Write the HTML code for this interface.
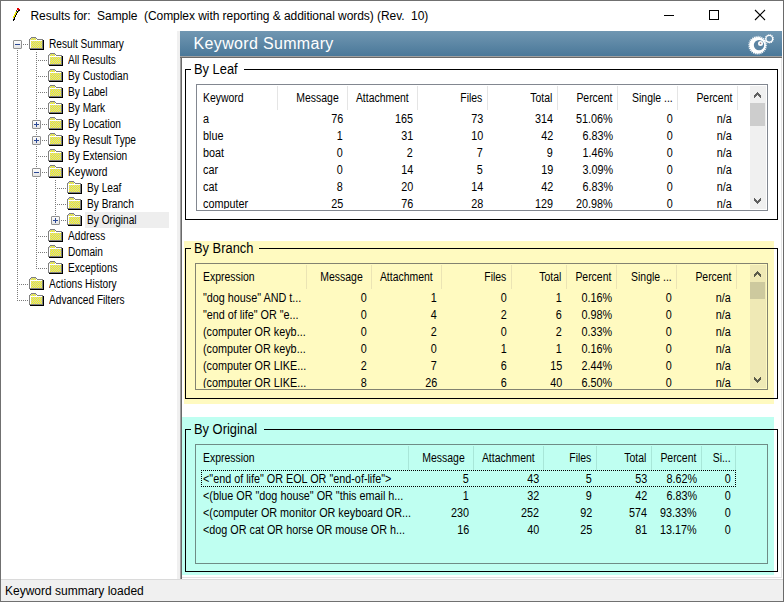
<!DOCTYPE html><html><head><meta charset="utf-8"><style>
html,body{margin:0;padding:0;}
body{width:784px;height:602px;position:relative;overflow:hidden;background:#fff;font-family:"Liberation Sans", sans-serif;}
.t{position:absolute;white-space:nowrap;}
.fold{position:absolute;width:16px;height:14px;}
</style></head><body>
<svg style="position:absolute;left:0;top:0" width="24" height="24" shape-rendering="crispEdges"><rect x="17" y="8" width="1" height="1" fill="#e00000"/><rect x="18" y="8" width="1" height="1" fill="#e00000"/><rect x="18" y="9" width="1" height="1" fill="#e00000"/><rect x="19" y="9" width="1" height="1" fill="#e00000"/><rect x="17" y="9" width="1" height="1" fill="#e00000"/><rect x="16" y="10" width="1" height="1" fill="#a00000"/><rect x="19" y="10" width="1" height="1" fill="#000"/><rect x="18" y="10" width="1" height="1" fill="#000"/><rect x="16" y="11" width="1" height="1" fill="#20a020"/><rect x="17" y="11" width="1" height="1" fill="#000"/><rect x="18" y="11" width="1" height="1" fill="#606060"/><rect x="16" y="12" width="1" height="1" fill="#f2e600"/><rect x="15" y="12" width="1" height="1" fill="#f2e600"/><rect x="15" y="13" width="1" height="1" fill="#f2e600"/><rect x="14" y="14" width="1" height="1" fill="#f2e600"/><rect x="15" y="14" width="1" height="1" fill="#f2e600"/><rect x="14" y="15" width="1" height="1" fill="#f2e600"/><rect x="13" y="16" width="1" height="1" fill="#f2e600"/><rect x="14" y="16" width="1" height="1" fill="#f2e600"/><rect x="13" y="17" width="1" height="1" fill="#f2e600"/><rect x="17" y="12" width="1" height="1" fill="#000"/><rect x="16" y="13" width="1" height="1" fill="#000"/><rect x="16" y="14" width="1" height="1" fill="#000"/><rect x="15" y="15" width="1" height="1" fill="#000"/><rect x="15" y="16" width="1" height="1" fill="#000"/><rect x="14" y="17" width="1" height="1" fill="#000"/><rect x="14" y="18" width="1" height="1" fill="#000"/><rect x="13" y="18" width="1" height="1" fill="#c8c8c8"/><rect x="13" y="19" width="1" height="1" fill="#000"/><rect x="14" y="19" width="1" height="1" fill="#000"/><rect x="13" y="20" width="1" height="1" fill="#000"/></svg>
<div class="t" style="left:30.5px;top:9.74px;font-size:12px;line-height:13.404px;color:#000;letter-spacing:-0.055px;">Results for:&nbsp; Sample&nbsp; (Complex with reporting &amp; additional words) (Rev.&nbsp; 10)</div>
<div style="position:absolute;left:664px;top:15px;width:10px;height:1px;background:#000"></div>
<div style="position:absolute;left:709px;top:10px;width:10px;height:10px;box-sizing:border-box;border:1px solid #000"></div>
<svg style="position:absolute;left:754px;top:9px" width="12" height="12" viewBox="0 0 12 12"><path d="M1 1 L11 11 M11 1 L1 11" stroke="#000" stroke-width="1.1"/></svg>
<div style="position:absolute;left:17px;top:50px;width:1px;height:251px;background-image:repeating-linear-gradient(to bottom,#7a7a7a 0 1px,transparent 1px 2px);"></div>
<div style="position:absolute;left:36px;top:52px;width:1px;height:217px;background-image:repeating-linear-gradient(to bottom,#7a7a7a 0 1px,transparent 1px 2px);"></div>
<div style="position:absolute;left:55px;top:180px;width:1px;height:41px;background-image:repeating-linear-gradient(to bottom,#7a7a7a 0 1px,transparent 1px 2px);"></div>
<div style="position:absolute;left:85px;top:212px;width:84px;height:16px;background:#eeeeee"></div>
<div style="position:absolute;left:23px;top:44px;width:5px;height:1px;background-image:repeating-linear-gradient(to right,#7a7a7a 0 1px,transparent 1px 2px);"></div>
<div style="position:absolute;left:13px;top:40px;width:9px;height:9px;box-sizing:border-box;border:1px solid #919191;border-radius:1px;background:linear-gradient(#fdfdfd,#e4e4e4)"></div>
<div style="position:absolute;left:15px;top:44px;width:5px;height:1px;background:#2b4895"></div>
<svg style="position:absolute;left:28px;top:36px" width="17" height="15" viewBox="0 0 17 15" shape-rendering="crispEdges"><path fill="#c4c4cc" d="M3 2h5v2h-5zM3 5h11v7h-11z"/><path fill="#ff0" d="M4 2h1v1h-1zM6 2h1v1h-1zM3 3h1v1h-1zM5 3h1v1h-1zM7 3h1v1h-1zM3 5h1v1h-1zM5 5h1v1h-1zM7 5h1v1h-1zM9 5h1v1h-1zM11 5h1v1h-1zM13 5h1v1h-1zM4 6h1v1h-1zM6 6h1v1h-1zM8 6h1v1h-1zM10 6h1v1h-1zM12 6h1v1h-1zM3 7h1v1h-1zM5 7h1v1h-1zM7 7h1v1h-1zM9 7h1v1h-1zM11 7h1v1h-1zM13 7h1v1h-1zM4 8h1v1h-1zM6 8h1v1h-1zM8 8h1v1h-1zM10 8h1v1h-1zM12 8h1v1h-1zM3 9h1v1h-1zM5 9h1v1h-1zM7 9h1v1h-1zM9 9h1v1h-1zM11 9h1v1h-1zM13 9h1v1h-1zM4 10h1v1h-1zM6 10h1v1h-1zM8 10h1v1h-1zM10 10h1v1h-1zM12 10h1v1h-1zM3 11h1v1h-1zM5 11h1v1h-1zM7 11h1v1h-1zM9 11h1v1h-1zM11 11h1v1h-1zM13 11h1v1h-1z"/><path fill="#808080" d="M3 1h5v1h-5zM2 2h1v1h-1zM8 2h1v1h-1zM9 3h6v1h-6zM1 3h1v10h-1zM1 12h14v1h-14zM14 4h1v9h-1z"/><path fill="#d0d0d0" d="M2 3h1v1h-1z"/><path fill="#fff" d="M2 4h12v1h-12zM2 4h1v8h-1z"/><path fill="#000" d="M15 4h1v10h-1zM2 13h14v1h-14z"/></svg>
<div class="t" style="left:49px;top:37.94px;font-size:12px;line-height:13.404px;color:#000;letter-spacing:0px;transform:scaleX(0.845);transform-origin:left center;">Result Summary</div>
<div style="position:absolute;left:38px;top:60px;width:9px;height:1px;background-image:repeating-linear-gradient(to right,#7a7a7a 0 1px,transparent 1px 2px);"></div>
<svg style="position:absolute;left:47px;top:52px" width="17" height="15" viewBox="0 0 17 15" shape-rendering="crispEdges"><path fill="#c4c4cc" d="M3 2h5v2h-5zM3 5h11v7h-11z"/><path fill="#ff0" d="M4 2h1v1h-1zM6 2h1v1h-1zM3 3h1v1h-1zM5 3h1v1h-1zM7 3h1v1h-1zM3 5h1v1h-1zM5 5h1v1h-1zM7 5h1v1h-1zM9 5h1v1h-1zM11 5h1v1h-1zM13 5h1v1h-1zM4 6h1v1h-1zM6 6h1v1h-1zM8 6h1v1h-1zM10 6h1v1h-1zM12 6h1v1h-1zM3 7h1v1h-1zM5 7h1v1h-1zM7 7h1v1h-1zM9 7h1v1h-1zM11 7h1v1h-1zM13 7h1v1h-1zM4 8h1v1h-1zM6 8h1v1h-1zM8 8h1v1h-1zM10 8h1v1h-1zM12 8h1v1h-1zM3 9h1v1h-1zM5 9h1v1h-1zM7 9h1v1h-1zM9 9h1v1h-1zM11 9h1v1h-1zM13 9h1v1h-1zM4 10h1v1h-1zM6 10h1v1h-1zM8 10h1v1h-1zM10 10h1v1h-1zM12 10h1v1h-1zM3 11h1v1h-1zM5 11h1v1h-1zM7 11h1v1h-1zM9 11h1v1h-1zM11 11h1v1h-1zM13 11h1v1h-1z"/><path fill="#808080" d="M3 1h5v1h-5zM2 2h1v1h-1zM8 2h1v1h-1zM9 3h6v1h-6zM1 3h1v10h-1zM1 12h14v1h-14zM14 4h1v9h-1z"/><path fill="#d0d0d0" d="M2 3h1v1h-1z"/><path fill="#fff" d="M2 4h12v1h-12zM2 4h1v8h-1z"/><path fill="#000" d="M15 4h1v10h-1zM2 13h14v1h-14z"/></svg>
<div class="t" style="left:68px;top:53.94px;font-size:12px;line-height:13.404px;color:#000;letter-spacing:0px;transform:scaleX(0.845);transform-origin:left center;">All Results</div>
<div style="position:absolute;left:38px;top:76px;width:9px;height:1px;background-image:repeating-linear-gradient(to right,#7a7a7a 0 1px,transparent 1px 2px);"></div>
<svg style="position:absolute;left:47px;top:68px" width="17" height="15" viewBox="0 0 17 15" shape-rendering="crispEdges"><path fill="#c4c4cc" d="M3 2h5v2h-5zM3 5h11v7h-11z"/><path fill="#ff0" d="M4 2h1v1h-1zM6 2h1v1h-1zM3 3h1v1h-1zM5 3h1v1h-1zM7 3h1v1h-1zM3 5h1v1h-1zM5 5h1v1h-1zM7 5h1v1h-1zM9 5h1v1h-1zM11 5h1v1h-1zM13 5h1v1h-1zM4 6h1v1h-1zM6 6h1v1h-1zM8 6h1v1h-1zM10 6h1v1h-1zM12 6h1v1h-1zM3 7h1v1h-1zM5 7h1v1h-1zM7 7h1v1h-1zM9 7h1v1h-1zM11 7h1v1h-1zM13 7h1v1h-1zM4 8h1v1h-1zM6 8h1v1h-1zM8 8h1v1h-1zM10 8h1v1h-1zM12 8h1v1h-1zM3 9h1v1h-1zM5 9h1v1h-1zM7 9h1v1h-1zM9 9h1v1h-1zM11 9h1v1h-1zM13 9h1v1h-1zM4 10h1v1h-1zM6 10h1v1h-1zM8 10h1v1h-1zM10 10h1v1h-1zM12 10h1v1h-1zM3 11h1v1h-1zM5 11h1v1h-1zM7 11h1v1h-1zM9 11h1v1h-1zM11 11h1v1h-1zM13 11h1v1h-1z"/><path fill="#808080" d="M3 1h5v1h-5zM2 2h1v1h-1zM8 2h1v1h-1zM9 3h6v1h-6zM1 3h1v10h-1zM1 12h14v1h-14zM14 4h1v9h-1z"/><path fill="#d0d0d0" d="M2 3h1v1h-1z"/><path fill="#fff" d="M2 4h12v1h-12zM2 4h1v8h-1z"/><path fill="#000" d="M15 4h1v10h-1zM2 13h14v1h-14z"/></svg>
<div class="t" style="left:68px;top:69.94px;font-size:12px;line-height:13.404px;color:#000;letter-spacing:0px;transform:scaleX(0.845);transform-origin:left center;">By Custodian</div>
<div style="position:absolute;left:38px;top:92px;width:9px;height:1px;background-image:repeating-linear-gradient(to right,#7a7a7a 0 1px,transparent 1px 2px);"></div>
<svg style="position:absolute;left:47px;top:84px" width="17" height="15" viewBox="0 0 17 15" shape-rendering="crispEdges"><path fill="#c4c4cc" d="M3 2h5v2h-5zM3 5h11v7h-11z"/><path fill="#ff0" d="M4 2h1v1h-1zM6 2h1v1h-1zM3 3h1v1h-1zM5 3h1v1h-1zM7 3h1v1h-1zM3 5h1v1h-1zM5 5h1v1h-1zM7 5h1v1h-1zM9 5h1v1h-1zM11 5h1v1h-1zM13 5h1v1h-1zM4 6h1v1h-1zM6 6h1v1h-1zM8 6h1v1h-1zM10 6h1v1h-1zM12 6h1v1h-1zM3 7h1v1h-1zM5 7h1v1h-1zM7 7h1v1h-1zM9 7h1v1h-1zM11 7h1v1h-1zM13 7h1v1h-1zM4 8h1v1h-1zM6 8h1v1h-1zM8 8h1v1h-1zM10 8h1v1h-1zM12 8h1v1h-1zM3 9h1v1h-1zM5 9h1v1h-1zM7 9h1v1h-1zM9 9h1v1h-1zM11 9h1v1h-1zM13 9h1v1h-1zM4 10h1v1h-1zM6 10h1v1h-1zM8 10h1v1h-1zM10 10h1v1h-1zM12 10h1v1h-1zM3 11h1v1h-1zM5 11h1v1h-1zM7 11h1v1h-1zM9 11h1v1h-1zM11 11h1v1h-1zM13 11h1v1h-1z"/><path fill="#808080" d="M3 1h5v1h-5zM2 2h1v1h-1zM8 2h1v1h-1zM9 3h6v1h-6zM1 3h1v10h-1zM1 12h14v1h-14zM14 4h1v9h-1z"/><path fill="#d0d0d0" d="M2 3h1v1h-1z"/><path fill="#fff" d="M2 4h12v1h-12zM2 4h1v8h-1z"/><path fill="#000" d="M15 4h1v10h-1zM2 13h14v1h-14z"/></svg>
<div class="t" style="left:68px;top:85.94px;font-size:12px;line-height:13.404px;color:#000;letter-spacing:0px;transform:scaleX(0.845);transform-origin:left center;">By Label</div>
<div style="position:absolute;left:38px;top:108px;width:9px;height:1px;background-image:repeating-linear-gradient(to right,#7a7a7a 0 1px,transparent 1px 2px);"></div>
<svg style="position:absolute;left:47px;top:100px" width="17" height="15" viewBox="0 0 17 15" shape-rendering="crispEdges"><path fill="#c4c4cc" d="M3 2h5v2h-5zM3 5h11v7h-11z"/><path fill="#ff0" d="M4 2h1v1h-1zM6 2h1v1h-1zM3 3h1v1h-1zM5 3h1v1h-1zM7 3h1v1h-1zM3 5h1v1h-1zM5 5h1v1h-1zM7 5h1v1h-1zM9 5h1v1h-1zM11 5h1v1h-1zM13 5h1v1h-1zM4 6h1v1h-1zM6 6h1v1h-1zM8 6h1v1h-1zM10 6h1v1h-1zM12 6h1v1h-1zM3 7h1v1h-1zM5 7h1v1h-1zM7 7h1v1h-1zM9 7h1v1h-1zM11 7h1v1h-1zM13 7h1v1h-1zM4 8h1v1h-1zM6 8h1v1h-1zM8 8h1v1h-1zM10 8h1v1h-1zM12 8h1v1h-1zM3 9h1v1h-1zM5 9h1v1h-1zM7 9h1v1h-1zM9 9h1v1h-1zM11 9h1v1h-1zM13 9h1v1h-1zM4 10h1v1h-1zM6 10h1v1h-1zM8 10h1v1h-1zM10 10h1v1h-1zM12 10h1v1h-1zM3 11h1v1h-1zM5 11h1v1h-1zM7 11h1v1h-1zM9 11h1v1h-1zM11 11h1v1h-1zM13 11h1v1h-1z"/><path fill="#808080" d="M3 1h5v1h-5zM2 2h1v1h-1zM8 2h1v1h-1zM9 3h6v1h-6zM1 3h1v10h-1zM1 12h14v1h-14zM14 4h1v9h-1z"/><path fill="#d0d0d0" d="M2 3h1v1h-1z"/><path fill="#fff" d="M2 4h12v1h-12zM2 4h1v8h-1z"/><path fill="#000" d="M15 4h1v10h-1zM2 13h14v1h-14z"/></svg>
<div class="t" style="left:68px;top:101.94px;font-size:12px;line-height:13.404px;color:#000;letter-spacing:0px;transform:scaleX(0.845);transform-origin:left center;">By Mark</div>
<div style="position:absolute;left:42px;top:124px;width:5px;height:1px;background-image:repeating-linear-gradient(to right,#7a7a7a 0 1px,transparent 1px 2px);"></div>
<div style="position:absolute;left:32px;top:120px;width:9px;height:9px;box-sizing:border-box;border:1px solid #919191;border-radius:1px;background:linear-gradient(#fdfdfd,#e4e4e4)"></div>
<div style="position:absolute;left:34px;top:124px;width:5px;height:1px;background:#2b4895"></div>
<div style="position:absolute;left:36px;top:122px;width:1px;height:5px;background:#2b4895"></div>
<svg style="position:absolute;left:47px;top:116px" width="17" height="15" viewBox="0 0 17 15" shape-rendering="crispEdges"><path fill="#c4c4cc" d="M3 2h5v2h-5zM3 5h11v7h-11z"/><path fill="#ff0" d="M4 2h1v1h-1zM6 2h1v1h-1zM3 3h1v1h-1zM5 3h1v1h-1zM7 3h1v1h-1zM3 5h1v1h-1zM5 5h1v1h-1zM7 5h1v1h-1zM9 5h1v1h-1zM11 5h1v1h-1zM13 5h1v1h-1zM4 6h1v1h-1zM6 6h1v1h-1zM8 6h1v1h-1zM10 6h1v1h-1zM12 6h1v1h-1zM3 7h1v1h-1zM5 7h1v1h-1zM7 7h1v1h-1zM9 7h1v1h-1zM11 7h1v1h-1zM13 7h1v1h-1zM4 8h1v1h-1zM6 8h1v1h-1zM8 8h1v1h-1zM10 8h1v1h-1zM12 8h1v1h-1zM3 9h1v1h-1zM5 9h1v1h-1zM7 9h1v1h-1zM9 9h1v1h-1zM11 9h1v1h-1zM13 9h1v1h-1zM4 10h1v1h-1zM6 10h1v1h-1zM8 10h1v1h-1zM10 10h1v1h-1zM12 10h1v1h-1zM3 11h1v1h-1zM5 11h1v1h-1zM7 11h1v1h-1zM9 11h1v1h-1zM11 11h1v1h-1zM13 11h1v1h-1z"/><path fill="#808080" d="M3 1h5v1h-5zM2 2h1v1h-1zM8 2h1v1h-1zM9 3h6v1h-6zM1 3h1v10h-1zM1 12h14v1h-14zM14 4h1v9h-1z"/><path fill="#d0d0d0" d="M2 3h1v1h-1z"/><path fill="#fff" d="M2 4h12v1h-12zM2 4h1v8h-1z"/><path fill="#000" d="M15 4h1v10h-1zM2 13h14v1h-14z"/></svg>
<div class="t" style="left:68px;top:117.94px;font-size:12px;line-height:13.404px;color:#000;letter-spacing:0px;transform:scaleX(0.845);transform-origin:left center;">By Location</div>
<div style="position:absolute;left:42px;top:140px;width:5px;height:1px;background-image:repeating-linear-gradient(to right,#7a7a7a 0 1px,transparent 1px 2px);"></div>
<div style="position:absolute;left:32px;top:136px;width:9px;height:9px;box-sizing:border-box;border:1px solid #919191;border-radius:1px;background:linear-gradient(#fdfdfd,#e4e4e4)"></div>
<div style="position:absolute;left:34px;top:140px;width:5px;height:1px;background:#2b4895"></div>
<div style="position:absolute;left:36px;top:138px;width:1px;height:5px;background:#2b4895"></div>
<svg style="position:absolute;left:47px;top:132px" width="17" height="15" viewBox="0 0 17 15" shape-rendering="crispEdges"><path fill="#c4c4cc" d="M3 2h5v2h-5zM3 5h11v7h-11z"/><path fill="#ff0" d="M4 2h1v1h-1zM6 2h1v1h-1zM3 3h1v1h-1zM5 3h1v1h-1zM7 3h1v1h-1zM3 5h1v1h-1zM5 5h1v1h-1zM7 5h1v1h-1zM9 5h1v1h-1zM11 5h1v1h-1zM13 5h1v1h-1zM4 6h1v1h-1zM6 6h1v1h-1zM8 6h1v1h-1zM10 6h1v1h-1zM12 6h1v1h-1zM3 7h1v1h-1zM5 7h1v1h-1zM7 7h1v1h-1zM9 7h1v1h-1zM11 7h1v1h-1zM13 7h1v1h-1zM4 8h1v1h-1zM6 8h1v1h-1zM8 8h1v1h-1zM10 8h1v1h-1zM12 8h1v1h-1zM3 9h1v1h-1zM5 9h1v1h-1zM7 9h1v1h-1zM9 9h1v1h-1zM11 9h1v1h-1zM13 9h1v1h-1zM4 10h1v1h-1zM6 10h1v1h-1zM8 10h1v1h-1zM10 10h1v1h-1zM12 10h1v1h-1zM3 11h1v1h-1zM5 11h1v1h-1zM7 11h1v1h-1zM9 11h1v1h-1zM11 11h1v1h-1zM13 11h1v1h-1z"/><path fill="#808080" d="M3 1h5v1h-5zM2 2h1v1h-1zM8 2h1v1h-1zM9 3h6v1h-6zM1 3h1v10h-1zM1 12h14v1h-14zM14 4h1v9h-1z"/><path fill="#d0d0d0" d="M2 3h1v1h-1z"/><path fill="#fff" d="M2 4h12v1h-12zM2 4h1v8h-1z"/><path fill="#000" d="M15 4h1v10h-1zM2 13h14v1h-14z"/></svg>
<div class="t" style="left:68px;top:133.94px;font-size:12px;line-height:13.404px;color:#000;letter-spacing:0px;transform:scaleX(0.845);transform-origin:left center;">By Result Type</div>
<div style="position:absolute;left:38px;top:156px;width:9px;height:1px;background-image:repeating-linear-gradient(to right,#7a7a7a 0 1px,transparent 1px 2px);"></div>
<svg style="position:absolute;left:47px;top:148px" width="17" height="15" viewBox="0 0 17 15" shape-rendering="crispEdges"><path fill="#c4c4cc" d="M3 2h5v2h-5zM3 5h11v7h-11z"/><path fill="#ff0" d="M4 2h1v1h-1zM6 2h1v1h-1zM3 3h1v1h-1zM5 3h1v1h-1zM7 3h1v1h-1zM3 5h1v1h-1zM5 5h1v1h-1zM7 5h1v1h-1zM9 5h1v1h-1zM11 5h1v1h-1zM13 5h1v1h-1zM4 6h1v1h-1zM6 6h1v1h-1zM8 6h1v1h-1zM10 6h1v1h-1zM12 6h1v1h-1zM3 7h1v1h-1zM5 7h1v1h-1zM7 7h1v1h-1zM9 7h1v1h-1zM11 7h1v1h-1zM13 7h1v1h-1zM4 8h1v1h-1zM6 8h1v1h-1zM8 8h1v1h-1zM10 8h1v1h-1zM12 8h1v1h-1zM3 9h1v1h-1zM5 9h1v1h-1zM7 9h1v1h-1zM9 9h1v1h-1zM11 9h1v1h-1zM13 9h1v1h-1zM4 10h1v1h-1zM6 10h1v1h-1zM8 10h1v1h-1zM10 10h1v1h-1zM12 10h1v1h-1zM3 11h1v1h-1zM5 11h1v1h-1zM7 11h1v1h-1zM9 11h1v1h-1zM11 11h1v1h-1zM13 11h1v1h-1z"/><path fill="#808080" d="M3 1h5v1h-5zM2 2h1v1h-1zM8 2h1v1h-1zM9 3h6v1h-6zM1 3h1v10h-1zM1 12h14v1h-14zM14 4h1v9h-1z"/><path fill="#d0d0d0" d="M2 3h1v1h-1z"/><path fill="#fff" d="M2 4h12v1h-12zM2 4h1v8h-1z"/><path fill="#000" d="M15 4h1v10h-1zM2 13h14v1h-14z"/></svg>
<div class="t" style="left:68px;top:149.94px;font-size:12px;line-height:13.404px;color:#000;letter-spacing:0px;transform:scaleX(0.845);transform-origin:left center;">By Extension</div>
<div style="position:absolute;left:42px;top:172px;width:5px;height:1px;background-image:repeating-linear-gradient(to right,#7a7a7a 0 1px,transparent 1px 2px);"></div>
<div style="position:absolute;left:32px;top:168px;width:9px;height:9px;box-sizing:border-box;border:1px solid #919191;border-radius:1px;background:linear-gradient(#fdfdfd,#e4e4e4)"></div>
<div style="position:absolute;left:34px;top:172px;width:5px;height:1px;background:#2b4895"></div>
<svg style="position:absolute;left:47px;top:164px" width="17" height="15" viewBox="0 0 17 15" shape-rendering="crispEdges"><path fill="#c4c4cc" d="M3 2h5v2h-5zM3 5h11v7h-11z"/><path fill="#ff0" d="M4 2h1v1h-1zM6 2h1v1h-1zM3 3h1v1h-1zM5 3h1v1h-1zM7 3h1v1h-1zM3 5h1v1h-1zM5 5h1v1h-1zM7 5h1v1h-1zM9 5h1v1h-1zM11 5h1v1h-1zM13 5h1v1h-1zM4 6h1v1h-1zM6 6h1v1h-1zM8 6h1v1h-1zM10 6h1v1h-1zM12 6h1v1h-1zM3 7h1v1h-1zM5 7h1v1h-1zM7 7h1v1h-1zM9 7h1v1h-1zM11 7h1v1h-1zM13 7h1v1h-1zM4 8h1v1h-1zM6 8h1v1h-1zM8 8h1v1h-1zM10 8h1v1h-1zM12 8h1v1h-1zM3 9h1v1h-1zM5 9h1v1h-1zM7 9h1v1h-1zM9 9h1v1h-1zM11 9h1v1h-1zM13 9h1v1h-1zM4 10h1v1h-1zM6 10h1v1h-1zM8 10h1v1h-1zM10 10h1v1h-1zM12 10h1v1h-1zM3 11h1v1h-1zM5 11h1v1h-1zM7 11h1v1h-1zM9 11h1v1h-1zM11 11h1v1h-1zM13 11h1v1h-1z"/><path fill="#808080" d="M3 1h5v1h-5zM2 2h1v1h-1zM8 2h1v1h-1zM9 3h6v1h-6zM1 3h1v10h-1zM1 12h14v1h-14zM14 4h1v9h-1z"/><path fill="#d0d0d0" d="M2 3h1v1h-1z"/><path fill="#fff" d="M2 4h12v1h-12zM2 4h1v8h-1z"/><path fill="#000" d="M15 4h1v10h-1zM2 13h14v1h-14z"/></svg>
<div class="t" style="left:68px;top:165.94px;font-size:12px;line-height:13.404px;color:#000;letter-spacing:0px;transform:scaleX(0.845);transform-origin:left center;">Keyword</div>
<div style="position:absolute;left:57px;top:188px;width:9px;height:1px;background-image:repeating-linear-gradient(to right,#7a7a7a 0 1px,transparent 1px 2px);"></div>
<svg style="position:absolute;left:66px;top:180px" width="17" height="15" viewBox="0 0 17 15" shape-rendering="crispEdges"><path fill="#c4c4cc" d="M3 2h5v2h-5zM3 5h11v7h-11z"/><path fill="#ff0" d="M4 2h1v1h-1zM6 2h1v1h-1zM3 3h1v1h-1zM5 3h1v1h-1zM7 3h1v1h-1zM3 5h1v1h-1zM5 5h1v1h-1zM7 5h1v1h-1zM9 5h1v1h-1zM11 5h1v1h-1zM13 5h1v1h-1zM4 6h1v1h-1zM6 6h1v1h-1zM8 6h1v1h-1zM10 6h1v1h-1zM12 6h1v1h-1zM3 7h1v1h-1zM5 7h1v1h-1zM7 7h1v1h-1zM9 7h1v1h-1zM11 7h1v1h-1zM13 7h1v1h-1zM4 8h1v1h-1zM6 8h1v1h-1zM8 8h1v1h-1zM10 8h1v1h-1zM12 8h1v1h-1zM3 9h1v1h-1zM5 9h1v1h-1zM7 9h1v1h-1zM9 9h1v1h-1zM11 9h1v1h-1zM13 9h1v1h-1zM4 10h1v1h-1zM6 10h1v1h-1zM8 10h1v1h-1zM10 10h1v1h-1zM12 10h1v1h-1zM3 11h1v1h-1zM5 11h1v1h-1zM7 11h1v1h-1zM9 11h1v1h-1zM11 11h1v1h-1zM13 11h1v1h-1z"/><path fill="#808080" d="M3 1h5v1h-5zM2 2h1v1h-1zM8 2h1v1h-1zM9 3h6v1h-6zM1 3h1v10h-1zM1 12h14v1h-14zM14 4h1v9h-1z"/><path fill="#d0d0d0" d="M2 3h1v1h-1z"/><path fill="#fff" d="M2 4h12v1h-12zM2 4h1v8h-1z"/><path fill="#000" d="M15 4h1v10h-1zM2 13h14v1h-14z"/></svg>
<div class="t" style="left:87px;top:181.94px;font-size:12px;line-height:13.404px;color:#000;letter-spacing:0px;transform:scaleX(0.845);transform-origin:left center;">By Leaf</div>
<div style="position:absolute;left:57px;top:204px;width:9px;height:1px;background-image:repeating-linear-gradient(to right,#7a7a7a 0 1px,transparent 1px 2px);"></div>
<svg style="position:absolute;left:66px;top:196px" width="17" height="15" viewBox="0 0 17 15" shape-rendering="crispEdges"><path fill="#c4c4cc" d="M3 2h5v2h-5zM3 5h11v7h-11z"/><path fill="#ff0" d="M4 2h1v1h-1zM6 2h1v1h-1zM3 3h1v1h-1zM5 3h1v1h-1zM7 3h1v1h-1zM3 5h1v1h-1zM5 5h1v1h-1zM7 5h1v1h-1zM9 5h1v1h-1zM11 5h1v1h-1zM13 5h1v1h-1zM4 6h1v1h-1zM6 6h1v1h-1zM8 6h1v1h-1zM10 6h1v1h-1zM12 6h1v1h-1zM3 7h1v1h-1zM5 7h1v1h-1zM7 7h1v1h-1zM9 7h1v1h-1zM11 7h1v1h-1zM13 7h1v1h-1zM4 8h1v1h-1zM6 8h1v1h-1zM8 8h1v1h-1zM10 8h1v1h-1zM12 8h1v1h-1zM3 9h1v1h-1zM5 9h1v1h-1zM7 9h1v1h-1zM9 9h1v1h-1zM11 9h1v1h-1zM13 9h1v1h-1zM4 10h1v1h-1zM6 10h1v1h-1zM8 10h1v1h-1zM10 10h1v1h-1zM12 10h1v1h-1zM3 11h1v1h-1zM5 11h1v1h-1zM7 11h1v1h-1zM9 11h1v1h-1zM11 11h1v1h-1zM13 11h1v1h-1z"/><path fill="#808080" d="M3 1h5v1h-5zM2 2h1v1h-1zM8 2h1v1h-1zM9 3h6v1h-6zM1 3h1v10h-1zM1 12h14v1h-14zM14 4h1v9h-1z"/><path fill="#d0d0d0" d="M2 3h1v1h-1z"/><path fill="#fff" d="M2 4h12v1h-12zM2 4h1v8h-1z"/><path fill="#000" d="M15 4h1v10h-1zM2 13h14v1h-14z"/></svg>
<div class="t" style="left:87px;top:197.94px;font-size:12px;line-height:13.404px;color:#000;letter-spacing:0px;transform:scaleX(0.845);transform-origin:left center;">By Branch</div>
<div style="position:absolute;left:61px;top:220px;width:5px;height:1px;background-image:repeating-linear-gradient(to right,#7a7a7a 0 1px,transparent 1px 2px);"></div>
<div style="position:absolute;left:51px;top:216px;width:9px;height:9px;box-sizing:border-box;border:1px solid #919191;border-radius:1px;background:linear-gradient(#fdfdfd,#e4e4e4)"></div>
<div style="position:absolute;left:53px;top:220px;width:5px;height:1px;background:#2b4895"></div>
<div style="position:absolute;left:55px;top:218px;width:1px;height:5px;background:#2b4895"></div>
<svg style="position:absolute;left:66px;top:212px" width="17" height="15" viewBox="0 0 17 15" shape-rendering="crispEdges"><path fill="#c4c4cc" d="M3 2h5v2h-5zM3 5h11v7h-11z"/><path fill="#ff0" d="M4 2h1v1h-1zM6 2h1v1h-1zM3 3h1v1h-1zM5 3h1v1h-1zM7 3h1v1h-1zM3 5h1v1h-1zM5 5h1v1h-1zM7 5h1v1h-1zM9 5h1v1h-1zM11 5h1v1h-1zM13 5h1v1h-1zM4 6h1v1h-1zM6 6h1v1h-1zM8 6h1v1h-1zM10 6h1v1h-1zM12 6h1v1h-1zM3 7h1v1h-1zM5 7h1v1h-1zM7 7h1v1h-1zM9 7h1v1h-1zM11 7h1v1h-1zM13 7h1v1h-1zM4 8h1v1h-1zM6 8h1v1h-1zM8 8h1v1h-1zM10 8h1v1h-1zM12 8h1v1h-1zM3 9h1v1h-1zM5 9h1v1h-1zM7 9h1v1h-1zM9 9h1v1h-1zM11 9h1v1h-1zM13 9h1v1h-1zM4 10h1v1h-1zM6 10h1v1h-1zM8 10h1v1h-1zM10 10h1v1h-1zM12 10h1v1h-1zM3 11h1v1h-1zM5 11h1v1h-1zM7 11h1v1h-1zM9 11h1v1h-1zM11 11h1v1h-1zM13 11h1v1h-1z"/><path fill="#808080" d="M3 1h5v1h-5zM2 2h1v1h-1zM8 2h1v1h-1zM9 3h6v1h-6zM1 3h1v10h-1zM1 12h14v1h-14zM14 4h1v9h-1z"/><path fill="#d0d0d0" d="M2 3h1v1h-1z"/><path fill="#fff" d="M2 4h12v1h-12zM2 4h1v8h-1z"/><path fill="#000" d="M15 4h1v10h-1zM2 13h14v1h-14z"/></svg>
<div class="t" style="left:87px;top:213.94px;font-size:12px;line-height:13.404px;color:#000;letter-spacing:0px;transform:scaleX(0.845);transform-origin:left center;">By Original</div>
<div style="position:absolute;left:38px;top:236px;width:9px;height:1px;background-image:repeating-linear-gradient(to right,#7a7a7a 0 1px,transparent 1px 2px);"></div>
<svg style="position:absolute;left:47px;top:228px" width="17" height="15" viewBox="0 0 17 15" shape-rendering="crispEdges"><path fill="#c4c4cc" d="M3 2h5v2h-5zM3 5h11v7h-11z"/><path fill="#ff0" d="M4 2h1v1h-1zM6 2h1v1h-1zM3 3h1v1h-1zM5 3h1v1h-1zM7 3h1v1h-1zM3 5h1v1h-1zM5 5h1v1h-1zM7 5h1v1h-1zM9 5h1v1h-1zM11 5h1v1h-1zM13 5h1v1h-1zM4 6h1v1h-1zM6 6h1v1h-1zM8 6h1v1h-1zM10 6h1v1h-1zM12 6h1v1h-1zM3 7h1v1h-1zM5 7h1v1h-1zM7 7h1v1h-1zM9 7h1v1h-1zM11 7h1v1h-1zM13 7h1v1h-1zM4 8h1v1h-1zM6 8h1v1h-1zM8 8h1v1h-1zM10 8h1v1h-1zM12 8h1v1h-1zM3 9h1v1h-1zM5 9h1v1h-1zM7 9h1v1h-1zM9 9h1v1h-1zM11 9h1v1h-1zM13 9h1v1h-1zM4 10h1v1h-1zM6 10h1v1h-1zM8 10h1v1h-1zM10 10h1v1h-1zM12 10h1v1h-1zM3 11h1v1h-1zM5 11h1v1h-1zM7 11h1v1h-1zM9 11h1v1h-1zM11 11h1v1h-1zM13 11h1v1h-1z"/><path fill="#808080" d="M3 1h5v1h-5zM2 2h1v1h-1zM8 2h1v1h-1zM9 3h6v1h-6zM1 3h1v10h-1zM1 12h14v1h-14zM14 4h1v9h-1z"/><path fill="#d0d0d0" d="M2 3h1v1h-1z"/><path fill="#fff" d="M2 4h12v1h-12zM2 4h1v8h-1z"/><path fill="#000" d="M15 4h1v10h-1zM2 13h14v1h-14z"/></svg>
<div class="t" style="left:68px;top:229.94px;font-size:12px;line-height:13.404px;color:#000;letter-spacing:0px;transform:scaleX(0.845);transform-origin:left center;">Address</div>
<div style="position:absolute;left:38px;top:252px;width:9px;height:1px;background-image:repeating-linear-gradient(to right,#7a7a7a 0 1px,transparent 1px 2px);"></div>
<svg style="position:absolute;left:47px;top:244px" width="17" height="15" viewBox="0 0 17 15" shape-rendering="crispEdges"><path fill="#c4c4cc" d="M3 2h5v2h-5zM3 5h11v7h-11z"/><path fill="#ff0" d="M4 2h1v1h-1zM6 2h1v1h-1zM3 3h1v1h-1zM5 3h1v1h-1zM7 3h1v1h-1zM3 5h1v1h-1zM5 5h1v1h-1zM7 5h1v1h-1zM9 5h1v1h-1zM11 5h1v1h-1zM13 5h1v1h-1zM4 6h1v1h-1zM6 6h1v1h-1zM8 6h1v1h-1zM10 6h1v1h-1zM12 6h1v1h-1zM3 7h1v1h-1zM5 7h1v1h-1zM7 7h1v1h-1zM9 7h1v1h-1zM11 7h1v1h-1zM13 7h1v1h-1zM4 8h1v1h-1zM6 8h1v1h-1zM8 8h1v1h-1zM10 8h1v1h-1zM12 8h1v1h-1zM3 9h1v1h-1zM5 9h1v1h-1zM7 9h1v1h-1zM9 9h1v1h-1zM11 9h1v1h-1zM13 9h1v1h-1zM4 10h1v1h-1zM6 10h1v1h-1zM8 10h1v1h-1zM10 10h1v1h-1zM12 10h1v1h-1zM3 11h1v1h-1zM5 11h1v1h-1zM7 11h1v1h-1zM9 11h1v1h-1zM11 11h1v1h-1zM13 11h1v1h-1z"/><path fill="#808080" d="M3 1h5v1h-5zM2 2h1v1h-1zM8 2h1v1h-1zM9 3h6v1h-6zM1 3h1v10h-1zM1 12h14v1h-14zM14 4h1v9h-1z"/><path fill="#d0d0d0" d="M2 3h1v1h-1z"/><path fill="#fff" d="M2 4h12v1h-12zM2 4h1v8h-1z"/><path fill="#000" d="M15 4h1v10h-1zM2 13h14v1h-14z"/></svg>
<div class="t" style="left:68px;top:245.94px;font-size:12px;line-height:13.404px;color:#000;letter-spacing:0px;transform:scaleX(0.845);transform-origin:left center;">Domain</div>
<div style="position:absolute;left:38px;top:268px;width:9px;height:1px;background-image:repeating-linear-gradient(to right,#7a7a7a 0 1px,transparent 1px 2px);"></div>
<svg style="position:absolute;left:47px;top:260px" width="17" height="15" viewBox="0 0 17 15" shape-rendering="crispEdges"><path fill="#c4c4cc" d="M3 2h5v2h-5zM3 5h11v7h-11z"/><path fill="#ff0" d="M4 2h1v1h-1zM6 2h1v1h-1zM3 3h1v1h-1zM5 3h1v1h-1zM7 3h1v1h-1zM3 5h1v1h-1zM5 5h1v1h-1zM7 5h1v1h-1zM9 5h1v1h-1zM11 5h1v1h-1zM13 5h1v1h-1zM4 6h1v1h-1zM6 6h1v1h-1zM8 6h1v1h-1zM10 6h1v1h-1zM12 6h1v1h-1zM3 7h1v1h-1zM5 7h1v1h-1zM7 7h1v1h-1zM9 7h1v1h-1zM11 7h1v1h-1zM13 7h1v1h-1zM4 8h1v1h-1zM6 8h1v1h-1zM8 8h1v1h-1zM10 8h1v1h-1zM12 8h1v1h-1zM3 9h1v1h-1zM5 9h1v1h-1zM7 9h1v1h-1zM9 9h1v1h-1zM11 9h1v1h-1zM13 9h1v1h-1zM4 10h1v1h-1zM6 10h1v1h-1zM8 10h1v1h-1zM10 10h1v1h-1zM12 10h1v1h-1zM3 11h1v1h-1zM5 11h1v1h-1zM7 11h1v1h-1zM9 11h1v1h-1zM11 11h1v1h-1zM13 11h1v1h-1z"/><path fill="#808080" d="M3 1h5v1h-5zM2 2h1v1h-1zM8 2h1v1h-1zM9 3h6v1h-6zM1 3h1v10h-1zM1 12h14v1h-14zM14 4h1v9h-1z"/><path fill="#d0d0d0" d="M2 3h1v1h-1z"/><path fill="#fff" d="M2 4h12v1h-12zM2 4h1v8h-1z"/><path fill="#000" d="M15 4h1v10h-1zM2 13h14v1h-14z"/></svg>
<div class="t" style="left:68px;top:261.94px;font-size:12px;line-height:13.404px;color:#000;letter-spacing:0px;transform:scaleX(0.845);transform-origin:left center;">Exceptions</div>
<div style="position:absolute;left:19px;top:284px;width:9px;height:1px;background-image:repeating-linear-gradient(to right,#7a7a7a 0 1px,transparent 1px 2px);"></div>
<svg style="position:absolute;left:28px;top:276px" width="17" height="15" viewBox="0 0 17 15" shape-rendering="crispEdges"><path fill="#c4c4cc" d="M3 2h5v2h-5zM3 5h11v7h-11z"/><path fill="#ff0" d="M4 2h1v1h-1zM6 2h1v1h-1zM3 3h1v1h-1zM5 3h1v1h-1zM7 3h1v1h-1zM3 5h1v1h-1zM5 5h1v1h-1zM7 5h1v1h-1zM9 5h1v1h-1zM11 5h1v1h-1zM13 5h1v1h-1zM4 6h1v1h-1zM6 6h1v1h-1zM8 6h1v1h-1zM10 6h1v1h-1zM12 6h1v1h-1zM3 7h1v1h-1zM5 7h1v1h-1zM7 7h1v1h-1zM9 7h1v1h-1zM11 7h1v1h-1zM13 7h1v1h-1zM4 8h1v1h-1zM6 8h1v1h-1zM8 8h1v1h-1zM10 8h1v1h-1zM12 8h1v1h-1zM3 9h1v1h-1zM5 9h1v1h-1zM7 9h1v1h-1zM9 9h1v1h-1zM11 9h1v1h-1zM13 9h1v1h-1zM4 10h1v1h-1zM6 10h1v1h-1zM8 10h1v1h-1zM10 10h1v1h-1zM12 10h1v1h-1zM3 11h1v1h-1zM5 11h1v1h-1zM7 11h1v1h-1zM9 11h1v1h-1zM11 11h1v1h-1zM13 11h1v1h-1z"/><path fill="#808080" d="M3 1h5v1h-5zM2 2h1v1h-1zM8 2h1v1h-1zM9 3h6v1h-6zM1 3h1v10h-1zM1 12h14v1h-14zM14 4h1v9h-1z"/><path fill="#d0d0d0" d="M2 3h1v1h-1z"/><path fill="#fff" d="M2 4h12v1h-12zM2 4h1v8h-1z"/><path fill="#000" d="M15 4h1v10h-1zM2 13h14v1h-14z"/></svg>
<div class="t" style="left:49px;top:277.94px;font-size:12px;line-height:13.404px;color:#000;letter-spacing:0px;transform:scaleX(0.845);transform-origin:left center;">Actions History</div>
<div style="position:absolute;left:19px;top:300px;width:9px;height:1px;background-image:repeating-linear-gradient(to right,#7a7a7a 0 1px,transparent 1px 2px);"></div>
<svg style="position:absolute;left:28px;top:292px" width="17" height="15" viewBox="0 0 17 15" shape-rendering="crispEdges"><path fill="#c4c4cc" d="M3 2h5v2h-5zM3 5h11v7h-11z"/><path fill="#ff0" d="M4 2h1v1h-1zM6 2h1v1h-1zM3 3h1v1h-1zM5 3h1v1h-1zM7 3h1v1h-1zM3 5h1v1h-1zM5 5h1v1h-1zM7 5h1v1h-1zM9 5h1v1h-1zM11 5h1v1h-1zM13 5h1v1h-1zM4 6h1v1h-1zM6 6h1v1h-1zM8 6h1v1h-1zM10 6h1v1h-1zM12 6h1v1h-1zM3 7h1v1h-1zM5 7h1v1h-1zM7 7h1v1h-1zM9 7h1v1h-1zM11 7h1v1h-1zM13 7h1v1h-1zM4 8h1v1h-1zM6 8h1v1h-1zM8 8h1v1h-1zM10 8h1v1h-1zM12 8h1v1h-1zM3 9h1v1h-1zM5 9h1v1h-1zM7 9h1v1h-1zM9 9h1v1h-1zM11 9h1v1h-1zM13 9h1v1h-1zM4 10h1v1h-1zM6 10h1v1h-1zM8 10h1v1h-1zM10 10h1v1h-1zM12 10h1v1h-1zM3 11h1v1h-1zM5 11h1v1h-1zM7 11h1v1h-1zM9 11h1v1h-1zM11 11h1v1h-1zM13 11h1v1h-1z"/><path fill="#808080" d="M3 1h5v1h-5zM2 2h1v1h-1zM8 2h1v1h-1zM9 3h6v1h-6zM1 3h1v10h-1zM1 12h14v1h-14zM14 4h1v9h-1z"/><path fill="#d0d0d0" d="M2 3h1v1h-1z"/><path fill="#fff" d="M2 4h12v1h-12zM2 4h1v8h-1z"/><path fill="#000" d="M15 4h1v10h-1zM2 13h14v1h-14z"/></svg>
<div class="t" style="left:49px;top:293.94px;font-size:12px;line-height:13.404px;color:#000;letter-spacing:0px;transform:scaleX(0.845);transform-origin:left center;">Advanced Filters</div>
<div style="position:absolute;left:177px;top:31px;width:3px;height:548px;background:#f0f0f0"></div>
<div style="position:absolute;left:180px;top:31px;width:1px;height:548px;background:#a0a0a0"></div>
<div style="position:absolute;left:181px;top:31px;width:1px;height:548px;background:#696969"></div>
<div style="position:absolute;left:781px;top:31px;width:1px;height:547px;background:#e3e3e3"></div>
<div style="position:absolute;left:182px;top:577px;width:600px;height:1px;background:#e3e3e3"></div>
<div style="position:absolute;left:180px;top:31px;width:602px;height:25px;background:linear-gradient(#7197b2,#4a7899)"></div>
<div style="position:absolute;left:180px;top:56px;width:602px;height:1px;background:#a0a0a0"></div>
<div style="position:absolute;left:180px;top:57px;width:602px;height:1px;background:#696969"></div>
<div class="t" style="left:193.6px;top:34.72px;font-size:16px;line-height:17.872px;color:#fff;letter-spacing:0.33px;">Keyword Summary</div>
<svg style="position:absolute;left:744px;top:31px" width="37" height="25" viewBox="0 0 37 25"><polygon points="23.10,14.57 23.07,15.10 21.62,15.43 21.54,15.88 22.80,16.67 22.65,17.18 21.17,17.19 20.99,17.61 22.04,18.66 21.78,19.13 20.33,18.80 20.07,19.17 20.86,20.43 20.50,20.83 19.16,20.19 18.83,20.49 19.31,21.89 18.88,22.20 17.72,21.28 17.32,21.50 17.48,22.97 16.99,23.18 16.06,22.02 15.62,22.14 15.45,23.62 14.93,23.71 14.28,22.37 13.83,22.40 13.33,23.80 12.80,23.77 12.47,22.32 12.02,22.24 11.23,23.50 10.72,23.35 10.71,21.87 10.29,21.69 9.24,22.74 8.77,22.48 9.10,21.03 8.73,20.77 7.47,21.56 7.07,21.20 7.71,19.86 7.41,19.53 6.01,20.01 5.70,19.58 6.62,18.42 6.40,18.02 4.93,18.18 4.72,17.69 5.88,16.76 5.76,16.32 4.28,16.15 4.19,15.63 5.53,14.98 5.50,14.53 4.10,14.03 4.13,13.50 5.58,13.17 5.66,12.72 4.40,11.93 4.55,11.42 6.03,11.41 6.21,10.99 5.16,9.94 5.42,9.47 6.87,9.80 7.13,9.43 6.34,8.17 6.70,7.77 8.04,8.41 8.37,8.11 7.89,6.71 8.32,6.40 9.48,7.32 9.88,7.10 9.72,5.63 10.21,5.42 11.14,6.58 11.58,6.46 11.75,4.98 12.27,4.89 12.92,6.23 13.37,6.20 13.87,4.80 14.40,4.83 14.73,6.28 15.18,6.36 15.97,5.10 16.48,5.25 16.49,6.73 16.91,6.91 17.96,5.86 18.43,6.12 18.10,7.57 18.47,7.83 19.73,7.04 20.13,7.40 19.49,8.74 19.79,9.07 21.19,8.59 21.50,9.02 20.58,10.18 20.80,10.58 22.27,10.42 22.48,10.91 21.32,11.84 21.44,12.28 22.92,12.45 23.01,12.97 21.67,13.62 21.70,14.07" fill="#fff"/><circle cx="15" cy="14.1" r="5.2" fill="#5b84a3"/><circle cx="16.5" cy="12.4" r="2.5" fill="#fff"/><circle cx="16.5" cy="12.4" r="0.8" fill="#a08080"/><path d="M20.5 11 L22.5 9.5" stroke="#dfe8ef" stroke-width="1.3"/><polygon points="29.99,8.06 29.93,8.59 29.05,8.88 28.90,9.29 29.41,10.07 29.13,10.52 28.21,10.40 27.90,10.71 28.02,11.63 27.57,11.91 26.79,11.40 26.38,11.55 26.09,12.43 25.56,12.49 25.08,11.69 24.65,11.64 24.00,12.32 23.50,12.14 23.41,11.21 23.04,10.98 22.17,11.30 21.80,10.93 22.12,10.06 21.89,9.69 20.96,9.60 20.78,9.10 21.46,8.45 21.41,8.02 20.61,7.54 20.67,7.01 21.55,6.72 21.70,6.31 21.19,5.53 21.47,5.08 22.39,5.20 22.70,4.89 22.58,3.97 23.03,3.69 23.81,4.20 24.22,4.05 24.51,3.17 25.04,3.11 25.52,3.91 25.95,3.96 26.60,3.28 27.10,3.46 27.19,4.39 27.56,4.62 28.43,4.30 28.80,4.67 28.48,5.54 28.71,5.91 29.64,6.00 29.82,6.50 29.14,7.15 29.19,7.58" fill="#fff"/><circle cx="25.3" cy="7.8" r="2.7" fill="#6990ad"/></svg>
<div style="position:absolute;left:185px;top:69px;width:593px;height:1px;background:#000"></div>
<div style="position:absolute;left:185px;top:69px;width:1px;height:151px;background:#000"></div>
<div style="position:absolute;left:777px;top:69px;width:1px;height:151px;background:#000"></div>
<div style="position:absolute;left:185px;top:219px;width:593px;height:1px;background:#000"></div>
<div style="position:absolute;left:191px;top:63px;width:53px;height:12px;background:#fff"></div>
<div class="t" style="left:193.5px;top:61.83px;font-size:14px;line-height:15.638px;color:#000;letter-spacing:0px;transform:scaleX(0.92);transform-origin:left center;">By Leaf</div>
<div style="position:absolute;left:196px;top:84px;width:572px;height:127px;box-sizing:border-box;border:1px solid #828790;background:#fff;overflow:hidden">
<div style="position:absolute;left:1px;top:1px;width:568px;height:123px;overflow:hidden">
<div style="position:absolute;left:79px;top:0px;width:1px;height:24px;background:#e5e5e5"></div>
<div style="position:absolute;left:149px;top:0px;width:1px;height:24px;background:#e5e5e5"></div>
<div style="position:absolute;left:219px;top:0px;width:1px;height:24px;background:#e5e5e5"></div>
<div style="position:absolute;left:289px;top:0px;width:1px;height:24px;background:#e5e5e5"></div>
<div style="position:absolute;left:359px;top:0px;width:1px;height:24px;background:#e5e5e5"></div>
<div style="position:absolute;left:419px;top:0px;width:1px;height:24px;background:#e5e5e5"></div>
<div style="position:absolute;left:479px;top:0px;width:1px;height:24px;background:#e5e5e5"></div>
<div style="position:absolute;left:539px;top:0px;width:1px;height:24px;background:#e5e5e5"></div>
<div class="t" style="left:5.300000000000011px;top:5.84px;font-size:12px;line-height:13.404px;letter-spacing:0px;transform:scaleX(0.87);transform-origin:left center;">Keyword</div>
<div class="t" style="right:427px;top:5.84px;font-size:12px;line-height:13.404px;letter-spacing:0px;transform:scaleX(0.87);transform-origin:right center;">Message</div>
<div class="t" style="right:357px;top:5.84px;font-size:12px;line-height:13.404px;letter-spacing:0px;transform:scaleX(0.87);transform-origin:right center;">Attachment</div>
<div class="t" style="right:283.5px;top:5.84px;font-size:12px;line-height:13.404px;letter-spacing:0px;transform:scaleX(0.87);transform-origin:right center;">Files</div>
<div class="t" style="right:213.5px;top:5.84px;font-size:12px;line-height:13.404px;letter-spacing:0px;transform:scaleX(0.87);transform-origin:right center;">Total</div>
<div class="t" style="right:153.5px;top:5.84px;font-size:12px;line-height:13.404px;letter-spacing:0px;transform:scaleX(0.87);transform-origin:right center;">Percent</div>
<div class="t" style="right:93.5px;top:5.84px;font-size:12px;line-height:13.404px;letter-spacing:0px;transform:scaleX(0.87);transform-origin:right center;">Single ...</div>
<div class="t" style="right:33.5px;top:5.84px;font-size:12px;line-height:13.404px;letter-spacing:0px;transform:scaleX(0.87);transform-origin:right center;">Percent</div>
<div class="t" style="left:5.300000000000011px;top:26.74px;font-size:12px;line-height:13.404px;letter-spacing:0px;transform:scaleX(0.9);transform-origin:left center;">a</div>
<div class="t" style="right:423px;top:26.74px;font-size:12px;line-height:13.404px;letter-spacing:0px;transform:scaleX(0.9);transform-origin:right center;">76</div>
<div class="t" style="right:353px;top:26.74px;font-size:12px;line-height:13.404px;letter-spacing:0px;transform:scaleX(0.9);transform-origin:right center;">165</div>
<div class="t" style="right:283px;top:26.74px;font-size:12px;line-height:13.404px;letter-spacing:0px;transform:scaleX(0.9);transform-origin:right center;">73</div>
<div class="t" style="right:213px;top:26.74px;font-size:12px;line-height:13.404px;letter-spacing:0px;transform:scaleX(0.9);transform-origin:right center;">314</div>
<div class="t" style="right:153px;top:26.74px;font-size:12px;line-height:13.404px;letter-spacing:0px;transform:scaleX(0.9);transform-origin:right center;">51.06%</div>
<div class="t" style="right:93px;top:26.74px;font-size:12px;line-height:13.404px;letter-spacing:0px;transform:scaleX(0.9);transform-origin:right center;">0</div>
<div class="t" style="right:34.299999999999955px;top:26.74px;font-size:12px;line-height:13.404px;letter-spacing:0px;transform:scaleX(0.9);transform-origin:right center;">n/a</div>
<div class="t" style="left:5.300000000000011px;top:43.74px;font-size:12px;line-height:13.404px;letter-spacing:0px;transform:scaleX(0.9);transform-origin:left center;">blue</div>
<div class="t" style="right:423px;top:43.74px;font-size:12px;line-height:13.404px;letter-spacing:0px;transform:scaleX(0.9);transform-origin:right center;">1</div>
<div class="t" style="right:353px;top:43.74px;font-size:12px;line-height:13.404px;letter-spacing:0px;transform:scaleX(0.9);transform-origin:right center;">31</div>
<div class="t" style="right:283px;top:43.74px;font-size:12px;line-height:13.404px;letter-spacing:0px;transform:scaleX(0.9);transform-origin:right center;">10</div>
<div class="t" style="right:213px;top:43.74px;font-size:12px;line-height:13.404px;letter-spacing:0px;transform:scaleX(0.9);transform-origin:right center;">42</div>
<div class="t" style="right:153px;top:43.74px;font-size:12px;line-height:13.404px;letter-spacing:0px;transform:scaleX(0.9);transform-origin:right center;">6.83%</div>
<div class="t" style="right:93px;top:43.74px;font-size:12px;line-height:13.404px;letter-spacing:0px;transform:scaleX(0.9);transform-origin:right center;">0</div>
<div class="t" style="right:34.299999999999955px;top:43.74px;font-size:12px;line-height:13.404px;letter-spacing:0px;transform:scaleX(0.9);transform-origin:right center;">n/a</div>
<div class="t" style="left:5.300000000000011px;top:60.74px;font-size:12px;line-height:13.404px;letter-spacing:0px;transform:scaleX(0.9);transform-origin:left center;">boat</div>
<div class="t" style="right:423px;top:60.74px;font-size:12px;line-height:13.404px;letter-spacing:0px;transform:scaleX(0.9);transform-origin:right center;">0</div>
<div class="t" style="right:353px;top:60.74px;font-size:12px;line-height:13.404px;letter-spacing:0px;transform:scaleX(0.9);transform-origin:right center;">2</div>
<div class="t" style="right:283px;top:60.74px;font-size:12px;line-height:13.404px;letter-spacing:0px;transform:scaleX(0.9);transform-origin:right center;">7</div>
<div class="t" style="right:213px;top:60.74px;font-size:12px;line-height:13.404px;letter-spacing:0px;transform:scaleX(0.9);transform-origin:right center;">9</div>
<div class="t" style="right:153px;top:60.74px;font-size:12px;line-height:13.404px;letter-spacing:0px;transform:scaleX(0.9);transform-origin:right center;">1.46%</div>
<div class="t" style="right:93px;top:60.74px;font-size:12px;line-height:13.404px;letter-spacing:0px;transform:scaleX(0.9);transform-origin:right center;">0</div>
<div class="t" style="right:34.299999999999955px;top:60.74px;font-size:12px;line-height:13.404px;letter-spacing:0px;transform:scaleX(0.9);transform-origin:right center;">n/a</div>
<div class="t" style="left:5.300000000000011px;top:77.74px;font-size:12px;line-height:13.404px;letter-spacing:0px;transform:scaleX(0.9);transform-origin:left center;">car</div>
<div class="t" style="right:423px;top:77.74px;font-size:12px;line-height:13.404px;letter-spacing:0px;transform:scaleX(0.9);transform-origin:right center;">0</div>
<div class="t" style="right:353px;top:77.74px;font-size:12px;line-height:13.404px;letter-spacing:0px;transform:scaleX(0.9);transform-origin:right center;">14</div>
<div class="t" style="right:283px;top:77.74px;font-size:12px;line-height:13.404px;letter-spacing:0px;transform:scaleX(0.9);transform-origin:right center;">5</div>
<div class="t" style="right:213px;top:77.74px;font-size:12px;line-height:13.404px;letter-spacing:0px;transform:scaleX(0.9);transform-origin:right center;">19</div>
<div class="t" style="right:153px;top:77.74px;font-size:12px;line-height:13.404px;letter-spacing:0px;transform:scaleX(0.9);transform-origin:right center;">3.09%</div>
<div class="t" style="right:93px;top:77.74px;font-size:12px;line-height:13.404px;letter-spacing:0px;transform:scaleX(0.9);transform-origin:right center;">0</div>
<div class="t" style="right:34.299999999999955px;top:77.74px;font-size:12px;line-height:13.404px;letter-spacing:0px;transform:scaleX(0.9);transform-origin:right center;">n/a</div>
<div class="t" style="left:5.300000000000011px;top:94.74px;font-size:12px;line-height:13.404px;letter-spacing:0px;transform:scaleX(0.9);transform-origin:left center;">cat</div>
<div class="t" style="right:423px;top:94.74px;font-size:12px;line-height:13.404px;letter-spacing:0px;transform:scaleX(0.9);transform-origin:right center;">8</div>
<div class="t" style="right:353px;top:94.74px;font-size:12px;line-height:13.404px;letter-spacing:0px;transform:scaleX(0.9);transform-origin:right center;">20</div>
<div class="t" style="right:283px;top:94.74px;font-size:12px;line-height:13.404px;letter-spacing:0px;transform:scaleX(0.9);transform-origin:right center;">14</div>
<div class="t" style="right:213px;top:94.74px;font-size:12px;line-height:13.404px;letter-spacing:0px;transform:scaleX(0.9);transform-origin:right center;">42</div>
<div class="t" style="right:153px;top:94.74px;font-size:12px;line-height:13.404px;letter-spacing:0px;transform:scaleX(0.9);transform-origin:right center;">6.83%</div>
<div class="t" style="right:93px;top:94.74px;font-size:12px;line-height:13.404px;letter-spacing:0px;transform:scaleX(0.9);transform-origin:right center;">0</div>
<div class="t" style="right:34.299999999999955px;top:94.74px;font-size:12px;line-height:13.404px;letter-spacing:0px;transform:scaleX(0.9);transform-origin:right center;">n/a</div>
<div class="t" style="left:5.300000000000011px;top:111.74px;font-size:12px;line-height:13.404px;letter-spacing:0px;transform:scaleX(0.9);transform-origin:left center;">computer</div>
<div class="t" style="right:423px;top:111.74px;font-size:12px;line-height:13.404px;letter-spacing:0px;transform:scaleX(0.9);transform-origin:right center;">25</div>
<div class="t" style="right:353px;top:111.74px;font-size:12px;line-height:13.404px;letter-spacing:0px;transform:scaleX(0.9);transform-origin:right center;">76</div>
<div class="t" style="right:283px;top:111.74px;font-size:12px;line-height:13.404px;letter-spacing:0px;transform:scaleX(0.9);transform-origin:right center;">28</div>
<div class="t" style="right:213px;top:111.74px;font-size:12px;line-height:13.404px;letter-spacing:0px;transform:scaleX(0.9);transform-origin:right center;">129</div>
<div class="t" style="right:153px;top:111.74px;font-size:12px;line-height:13.404px;letter-spacing:0px;transform:scaleX(0.9);transform-origin:right center;">20.98%</div>
<div class="t" style="right:93px;top:111.74px;font-size:12px;line-height:13.404px;letter-spacing:0px;transform:scaleX(0.9);transform-origin:right center;">0</div>
<div class="t" style="right:34.299999999999955px;top:111.74px;font-size:12px;line-height:13.404px;letter-spacing:0px;transform:scaleX(0.9);transform-origin:right center;">n/a</div>
<div style="position:absolute;left:552px;top:0px;width:16px;height:123px;background:#f0f0f0"></div>
<div style="position:absolute;left:552px;top:17px;width:15px;height:23px;background:#cdcdcd"></div>
<svg style="position:absolute;left:556px;top:6px" width="7" height="6" shape-rendering="crispEdges" fill="#606060"><rect x="3" y="0" width="1" height="1"/><rect x="2" y="1" width="1" height="1"/><rect x="3" y="1" width="1" height="1"/><rect x="4" y="1" width="1" height="1"/><rect x="1" y="2" width="1" height="1"/><rect x="2" y="2" width="1" height="1"/><rect x="3" y="2" width="1" height="1"/><rect x="4" y="2" width="1" height="1"/><rect x="5" y="2" width="1" height="1"/><rect x="0" y="3" width="1" height="1"/><rect x="1" y="3" width="1" height="1"/><rect x="2" y="3" width="1" height="1"/><rect x="4" y="3" width="1" height="1"/><rect x="5" y="3" width="1" height="1"/><rect x="6" y="3" width="1" height="1"/><rect x="0" y="4" width="1" height="1"/><rect x="1" y="4" width="1" height="1"/><rect x="5" y="4" width="1" height="1"/><rect x="6" y="4" width="1" height="1"/><rect x="0" y="5" width="1" height="1"/><rect x="6" y="5" width="1" height="1"/></svg>
<svg style="position:absolute;left:556px;top:112px" width="7" height="6" shape-rendering="crispEdges" fill="#606060"><rect x="3" y="5" width="1" height="1"/><rect x="2" y="4" width="1" height="1"/><rect x="3" y="4" width="1" height="1"/><rect x="4" y="4" width="1" height="1"/><rect x="1" y="3" width="1" height="1"/><rect x="2" y="3" width="1" height="1"/><rect x="3" y="3" width="1" height="1"/><rect x="4" y="3" width="1" height="1"/><rect x="5" y="3" width="1" height="1"/><rect x="0" y="2" width="1" height="1"/><rect x="1" y="2" width="1" height="1"/><rect x="2" y="2" width="1" height="1"/><rect x="4" y="2" width="1" height="1"/><rect x="5" y="2" width="1" height="1"/><rect x="6" y="2" width="1" height="1"/><rect x="0" y="1" width="1" height="1"/><rect x="1" y="1" width="1" height="1"/><rect x="5" y="1" width="1" height="1"/><rect x="6" y="1" width="1" height="1"/><rect x="0" y="0" width="1" height="1"/><rect x="6" y="0" width="1" height="1"/></svg>
</div></div>
<div style="position:absolute;left:184px;top:241px;width:590px;height:163px;background:#fffac0"></div>
<div style="position:absolute;left:185px;top:248px;width:593px;height:1px;background:#000"></div>
<div style="position:absolute;left:185px;top:248px;width:1px;height:151px;background:#000"></div>
<div style="position:absolute;left:777px;top:248px;width:1px;height:151px;background:#000"></div>
<div style="position:absolute;left:185px;top:398px;width:593px;height:1px;background:#000"></div>
<div style="position:absolute;left:191px;top:242px;width:68px;height:12px;background:#fffac0"></div>
<div class="t" style="left:193.5px;top:240.83px;font-size:14px;line-height:15.638px;color:#000;letter-spacing:0px;transform:scaleX(0.92);transform-origin:left center;">By Branch</div>
<div style="position:absolute;left:195px;top:263px;width:573px;height:127px;box-sizing:border-box;border:1px solid #828270;background:#fffac0;overflow:hidden">
<div style="position:absolute;left:1px;top:1px;width:569px;height:123px;overflow:hidden">
<div style="position:absolute;left:109px;top:0px;width:1px;height:24px;background:#ebe4b4"></div>
<div style="position:absolute;left:174px;top:0px;width:1px;height:24px;background:#ebe4b4"></div>
<div style="position:absolute;left:244px;top:0px;width:1px;height:24px;background:#ebe4b4"></div>
<div style="position:absolute;left:314px;top:0px;width:1px;height:24px;background:#ebe4b4"></div>
<div style="position:absolute;left:369px;top:0px;width:1px;height:24px;background:#ebe4b4"></div>
<div style="position:absolute;left:419px;top:0px;width:1px;height:24px;background:#ebe4b4"></div>
<div style="position:absolute;left:479px;top:0px;width:1px;height:24px;background:#ebe4b4"></div>
<div style="position:absolute;left:539px;top:0px;width:1px;height:24px;background:#ebe4b4"></div>
<div class="t" style="left:6px;top:5.84px;font-size:12px;line-height:13.404px;letter-spacing:0px;transform:scaleX(0.87);transform-origin:left center;">Expression</div>
<div class="t" style="right:403px;top:5.84px;font-size:12px;line-height:13.404px;letter-spacing:0px;transform:scaleX(0.87);transform-origin:right center;">Message</div>
<div class="t" style="right:333px;top:5.84px;font-size:12px;line-height:13.404px;letter-spacing:0px;transform:scaleX(0.87);transform-origin:right center;">Attachment</div>
<div class="t" style="right:259.5px;top:5.84px;font-size:12px;line-height:13.404px;letter-spacing:0px;transform:scaleX(0.87);transform-origin:right center;">Files</div>
<div class="t" style="right:204.5px;top:5.84px;font-size:12px;line-height:13.404px;letter-spacing:0px;transform:scaleX(0.87);transform-origin:right center;">Total</div>
<div class="t" style="right:154.5px;top:5.84px;font-size:12px;line-height:13.404px;letter-spacing:0px;transform:scaleX(0.87);transform-origin:right center;">Percent</div>
<div class="t" style="right:94.5px;top:5.84px;font-size:12px;line-height:13.404px;letter-spacing:0px;transform:scaleX(0.87);transform-origin:right center;">Single ...</div>
<div class="t" style="right:34.5px;top:5.84px;font-size:12px;line-height:13.404px;letter-spacing:0px;transform:scaleX(0.87);transform-origin:right center;">Percent</div>
<div class="t" style="left:6px;top:26.74px;font-size:12px;line-height:13.404px;letter-spacing:0px;transform:scaleX(0.9);transform-origin:left center;">"dog house" AND t...</div>
<div class="t" style="right:399px;top:26.74px;font-size:12px;line-height:13.404px;letter-spacing:0px;transform:scaleX(0.9);transform-origin:right center;">0</div>
<div class="t" style="right:329px;top:26.74px;font-size:12px;line-height:13.404px;letter-spacing:0px;transform:scaleX(0.9);transform-origin:right center;">1</div>
<div class="t" style="right:259px;top:26.74px;font-size:12px;line-height:13.404px;letter-spacing:0px;transform:scaleX(0.9);transform-origin:right center;">0</div>
<div class="t" style="right:204px;top:26.74px;font-size:12px;line-height:13.404px;letter-spacing:0px;transform:scaleX(0.9);transform-origin:right center;">1</div>
<div class="t" style="right:154px;top:26.74px;font-size:12px;line-height:13.404px;letter-spacing:0px;transform:scaleX(0.9);transform-origin:right center;">0.16%</div>
<div class="t" style="right:94px;top:26.74px;font-size:12px;line-height:13.404px;letter-spacing:0px;transform:scaleX(0.9);transform-origin:right center;">0</div>
<div class="t" style="right:35.299999999999955px;top:26.74px;font-size:12px;line-height:13.404px;letter-spacing:0px;transform:scaleX(0.9);transform-origin:right center;">n/a</div>
<div class="t" style="left:6px;top:43.74px;font-size:12px;line-height:13.404px;letter-spacing:0px;transform:scaleX(0.9);transform-origin:left center;">"end of life" OR "e...</div>
<div class="t" style="right:399px;top:43.74px;font-size:12px;line-height:13.404px;letter-spacing:0px;transform:scaleX(0.9);transform-origin:right center;">0</div>
<div class="t" style="right:329px;top:43.74px;font-size:12px;line-height:13.404px;letter-spacing:0px;transform:scaleX(0.9);transform-origin:right center;">4</div>
<div class="t" style="right:259px;top:43.74px;font-size:12px;line-height:13.404px;letter-spacing:0px;transform:scaleX(0.9);transform-origin:right center;">2</div>
<div class="t" style="right:204px;top:43.74px;font-size:12px;line-height:13.404px;letter-spacing:0px;transform:scaleX(0.9);transform-origin:right center;">6</div>
<div class="t" style="right:154px;top:43.74px;font-size:12px;line-height:13.404px;letter-spacing:0px;transform:scaleX(0.9);transform-origin:right center;">0.98%</div>
<div class="t" style="right:94px;top:43.74px;font-size:12px;line-height:13.404px;letter-spacing:0px;transform:scaleX(0.9);transform-origin:right center;">0</div>
<div class="t" style="right:35.299999999999955px;top:43.74px;font-size:12px;line-height:13.404px;letter-spacing:0px;transform:scaleX(0.9);transform-origin:right center;">n/a</div>
<div class="t" style="left:6px;top:60.74px;font-size:12px;line-height:13.404px;letter-spacing:0px;transform:scaleX(0.9);transform-origin:left center;">(computer OR keyb...</div>
<div class="t" style="right:399px;top:60.74px;font-size:12px;line-height:13.404px;letter-spacing:0px;transform:scaleX(0.9);transform-origin:right center;">0</div>
<div class="t" style="right:329px;top:60.74px;font-size:12px;line-height:13.404px;letter-spacing:0px;transform:scaleX(0.9);transform-origin:right center;">2</div>
<div class="t" style="right:259px;top:60.74px;font-size:12px;line-height:13.404px;letter-spacing:0px;transform:scaleX(0.9);transform-origin:right center;">0</div>
<div class="t" style="right:204px;top:60.74px;font-size:12px;line-height:13.404px;letter-spacing:0px;transform:scaleX(0.9);transform-origin:right center;">2</div>
<div class="t" style="right:154px;top:60.74px;font-size:12px;line-height:13.404px;letter-spacing:0px;transform:scaleX(0.9);transform-origin:right center;">0.33%</div>
<div class="t" style="right:94px;top:60.74px;font-size:12px;line-height:13.404px;letter-spacing:0px;transform:scaleX(0.9);transform-origin:right center;">0</div>
<div class="t" style="right:35.299999999999955px;top:60.74px;font-size:12px;line-height:13.404px;letter-spacing:0px;transform:scaleX(0.9);transform-origin:right center;">n/a</div>
<div class="t" style="left:6px;top:77.74px;font-size:12px;line-height:13.404px;letter-spacing:0px;transform:scaleX(0.9);transform-origin:left center;">(computer OR keyb...</div>
<div class="t" style="right:399px;top:77.74px;font-size:12px;line-height:13.404px;letter-spacing:0px;transform:scaleX(0.9);transform-origin:right center;">0</div>
<div class="t" style="right:329px;top:77.74px;font-size:12px;line-height:13.404px;letter-spacing:0px;transform:scaleX(0.9);transform-origin:right center;">0</div>
<div class="t" style="right:259px;top:77.74px;font-size:12px;line-height:13.404px;letter-spacing:0px;transform:scaleX(0.9);transform-origin:right center;">1</div>
<div class="t" style="right:204px;top:77.74px;font-size:12px;line-height:13.404px;letter-spacing:0px;transform:scaleX(0.9);transform-origin:right center;">1</div>
<div class="t" style="right:154px;top:77.74px;font-size:12px;line-height:13.404px;letter-spacing:0px;transform:scaleX(0.9);transform-origin:right center;">0.16%</div>
<div class="t" style="right:94px;top:77.74px;font-size:12px;line-height:13.404px;letter-spacing:0px;transform:scaleX(0.9);transform-origin:right center;">0</div>
<div class="t" style="right:35.299999999999955px;top:77.74px;font-size:12px;line-height:13.404px;letter-spacing:0px;transform:scaleX(0.9);transform-origin:right center;">n/a</div>
<div class="t" style="left:6px;top:94.74px;font-size:12px;line-height:13.404px;letter-spacing:0px;transform:scaleX(0.9);transform-origin:left center;">(computer OR LIKE...</div>
<div class="t" style="right:399px;top:94.74px;font-size:12px;line-height:13.404px;letter-spacing:0px;transform:scaleX(0.9);transform-origin:right center;">2</div>
<div class="t" style="right:329px;top:94.74px;font-size:12px;line-height:13.404px;letter-spacing:0px;transform:scaleX(0.9);transform-origin:right center;">7</div>
<div class="t" style="right:259px;top:94.74px;font-size:12px;line-height:13.404px;letter-spacing:0px;transform:scaleX(0.9);transform-origin:right center;">6</div>
<div class="t" style="right:204px;top:94.74px;font-size:12px;line-height:13.404px;letter-spacing:0px;transform:scaleX(0.9);transform-origin:right center;">15</div>
<div class="t" style="right:154px;top:94.74px;font-size:12px;line-height:13.404px;letter-spacing:0px;transform:scaleX(0.9);transform-origin:right center;">2.44%</div>
<div class="t" style="right:94px;top:94.74px;font-size:12px;line-height:13.404px;letter-spacing:0px;transform:scaleX(0.9);transform-origin:right center;">0</div>
<div class="t" style="right:35.299999999999955px;top:94.74px;font-size:12px;line-height:13.404px;letter-spacing:0px;transform:scaleX(0.9);transform-origin:right center;">n/a</div>
<div class="t" style="left:6px;top:111.74px;font-size:12px;line-height:13.404px;letter-spacing:0px;transform:scaleX(0.9);transform-origin:left center;">(computer OR LIKE...</div>
<div class="t" style="right:399px;top:111.74px;font-size:12px;line-height:13.404px;letter-spacing:0px;transform:scaleX(0.9);transform-origin:right center;">8</div>
<div class="t" style="right:329px;top:111.74px;font-size:12px;line-height:13.404px;letter-spacing:0px;transform:scaleX(0.9);transform-origin:right center;">26</div>
<div class="t" style="right:259px;top:111.74px;font-size:12px;line-height:13.404px;letter-spacing:0px;transform:scaleX(0.9);transform-origin:right center;">6</div>
<div class="t" style="right:204px;top:111.74px;font-size:12px;line-height:13.404px;letter-spacing:0px;transform:scaleX(0.9);transform-origin:right center;">40</div>
<div class="t" style="right:154px;top:111.74px;font-size:12px;line-height:13.404px;letter-spacing:0px;transform:scaleX(0.9);transform-origin:right center;">6.50%</div>
<div class="t" style="right:94px;top:111.74px;font-size:12px;line-height:13.404px;letter-spacing:0px;transform:scaleX(0.9);transform-origin:right center;">0</div>
<div class="t" style="right:35.299999999999955px;top:111.74px;font-size:12px;line-height:13.404px;letter-spacing:0px;transform:scaleX(0.9);transform-origin:right center;">n/a</div>
<div style="position:absolute;left:553px;top:0px;width:16px;height:123px;background:#efe9b5"></div>
<div style="position:absolute;left:553px;top:17px;width:15px;height:17px;background:#cdc99e"></div>
<svg style="position:absolute;left:557px;top:6px" width="7" height="6" shape-rendering="crispEdges" fill="#5a5a4a"><rect x="3" y="0" width="1" height="1"/><rect x="2" y="1" width="1" height="1"/><rect x="3" y="1" width="1" height="1"/><rect x="4" y="1" width="1" height="1"/><rect x="1" y="2" width="1" height="1"/><rect x="2" y="2" width="1" height="1"/><rect x="3" y="2" width="1" height="1"/><rect x="4" y="2" width="1" height="1"/><rect x="5" y="2" width="1" height="1"/><rect x="0" y="3" width="1" height="1"/><rect x="1" y="3" width="1" height="1"/><rect x="2" y="3" width="1" height="1"/><rect x="4" y="3" width="1" height="1"/><rect x="5" y="3" width="1" height="1"/><rect x="6" y="3" width="1" height="1"/><rect x="0" y="4" width="1" height="1"/><rect x="1" y="4" width="1" height="1"/><rect x="5" y="4" width="1" height="1"/><rect x="6" y="4" width="1" height="1"/><rect x="0" y="5" width="1" height="1"/><rect x="6" y="5" width="1" height="1"/></svg>
<svg style="position:absolute;left:557px;top:112px" width="7" height="6" shape-rendering="crispEdges" fill="#5a5a4a"><rect x="3" y="5" width="1" height="1"/><rect x="2" y="4" width="1" height="1"/><rect x="3" y="4" width="1" height="1"/><rect x="4" y="4" width="1" height="1"/><rect x="1" y="3" width="1" height="1"/><rect x="2" y="3" width="1" height="1"/><rect x="3" y="3" width="1" height="1"/><rect x="4" y="3" width="1" height="1"/><rect x="5" y="3" width="1" height="1"/><rect x="0" y="2" width="1" height="1"/><rect x="1" y="2" width="1" height="1"/><rect x="2" y="2" width="1" height="1"/><rect x="4" y="2" width="1" height="1"/><rect x="5" y="2" width="1" height="1"/><rect x="6" y="2" width="1" height="1"/><rect x="0" y="1" width="1" height="1"/><rect x="1" y="1" width="1" height="1"/><rect x="5" y="1" width="1" height="1"/><rect x="6" y="1" width="1" height="1"/><rect x="0" y="0" width="1" height="1"/><rect x="6" y="0" width="1" height="1"/></svg>
</div></div>
<div style="position:absolute;left:182px;top:417px;width:592px;height:158px;background:#bffff1"></div>
<div style="position:absolute;left:185px;top:429px;width:593px;height:1px;background:#000"></div>
<div style="position:absolute;left:185px;top:429px;width:1px;height:143px;background:#000"></div>
<div style="position:absolute;left:777px;top:429px;width:1px;height:143px;background:#000"></div>
<div style="position:absolute;left:185px;top:571px;width:593px;height:1px;background:#000"></div>
<div style="position:absolute;left:191px;top:423px;width:73px;height:12px;background:#bffff1"></div>
<div class="t" style="left:193.5px;top:421.83px;font-size:14px;line-height:15.638px;color:#000;letter-spacing:0px;transform:scaleX(0.92);transform-origin:left center;">By Original</div>
<div style="position:absolute;left:195px;top:444px;width:573px;height:120px;box-sizing:border-box;border:1px solid #6e8c86;background:#bffff1;overflow:hidden">
<div style="position:absolute;left:1px;top:1px;width:569px;height:116px;overflow:hidden">
<div style="position:absolute;left:211px;top:0px;width:1px;height:24px;background:#a8e6d8"></div>
<div style="position:absolute;left:276px;top:0px;width:1px;height:24px;background:#a8e6d8"></div>
<div style="position:absolute;left:346px;top:0px;width:1px;height:24px;background:#a8e6d8"></div>
<div style="position:absolute;left:399px;top:0px;width:1px;height:24px;background:#a8e6d8"></div>
<div style="position:absolute;left:454px;top:0px;width:1px;height:24px;background:#a8e6d8"></div>
<div style="position:absolute;left:504px;top:0px;width:1px;height:24px;background:#a8e6d8"></div>
<div style="position:absolute;left:538px;top:0px;width:1px;height:24px;background:#a8e6d8"></div>
<div class="t" style="left:6px;top:5.84px;font-size:12px;line-height:13.404px;letter-spacing:0px;transform:scaleX(0.87);transform-origin:left center;">Expression</div>
<div class="t" style="right:301px;top:5.84px;font-size:12px;line-height:13.404px;letter-spacing:0px;transform:scaleX(0.87);transform-origin:right center;">Message</div>
<div class="t" style="right:231px;top:5.84px;font-size:12px;line-height:13.404px;letter-spacing:0px;transform:scaleX(0.87);transform-origin:right center;">Attachment</div>
<div class="t" style="right:174.5px;top:5.84px;font-size:12px;line-height:13.404px;letter-spacing:0px;transform:scaleX(0.87);transform-origin:right center;">Files</div>
<div class="t" style="right:119.5px;top:5.84px;font-size:12px;line-height:13.404px;letter-spacing:0px;transform:scaleX(0.87);transform-origin:right center;">Total</div>
<div class="t" style="right:69.5px;top:5.84px;font-size:12px;line-height:13.404px;letter-spacing:0px;transform:scaleX(0.87);transform-origin:right center;">Percent</div>
<div class="t" style="right:35.5px;top:5.84px;font-size:12px;line-height:13.404px;letter-spacing:0px;transform:scaleX(0.87);transform-origin:right center;">Si...</div>
<div style="position:absolute;left:4px;top:24px;width:535px;height:17px;box-sizing:border-box;border:1px dotted #000"></div>
<div class="t" style="left:6px;top:26.74px;font-size:12px;line-height:13.404px;letter-spacing:0px;transform:scaleX(0.9);transform-origin:left center;">&lt;"end of life" OR EOL OR "end-of-life"&gt;</div>
<div class="t" style="right:297px;top:26.74px;font-size:12px;line-height:13.404px;letter-spacing:0px;transform:scaleX(0.9);transform-origin:right center;">5</div>
<div class="t" style="right:227px;top:26.74px;font-size:12px;line-height:13.404px;letter-spacing:0px;transform:scaleX(0.9);transform-origin:right center;">43</div>
<div class="t" style="right:174px;top:26.74px;font-size:12px;line-height:13.404px;letter-spacing:0px;transform:scaleX(0.9);transform-origin:right center;">5</div>
<div class="t" style="right:119px;top:26.74px;font-size:12px;line-height:13.404px;letter-spacing:0px;transform:scaleX(0.9);transform-origin:right center;">53</div>
<div class="t" style="right:69px;top:26.74px;font-size:12px;line-height:13.404px;letter-spacing:0px;transform:scaleX(0.9);transform-origin:right center;">8.62%</div>
<div class="t" style="right:35px;top:26.74px;font-size:12px;line-height:13.404px;letter-spacing:0px;transform:scaleX(0.9);transform-origin:right center;">0</div>
<div class="t" style="left:6px;top:43.74px;font-size:12px;line-height:13.404px;letter-spacing:0px;transform:scaleX(0.9);transform-origin:left center;">&lt;(blue OR "dog house" OR "this email h...</div>
<div class="t" style="right:297px;top:43.74px;font-size:12px;line-height:13.404px;letter-spacing:0px;transform:scaleX(0.9);transform-origin:right center;">1</div>
<div class="t" style="right:227px;top:43.74px;font-size:12px;line-height:13.404px;letter-spacing:0px;transform:scaleX(0.9);transform-origin:right center;">32</div>
<div class="t" style="right:174px;top:43.74px;font-size:12px;line-height:13.404px;letter-spacing:0px;transform:scaleX(0.9);transform-origin:right center;">9</div>
<div class="t" style="right:119px;top:43.74px;font-size:12px;line-height:13.404px;letter-spacing:0px;transform:scaleX(0.9);transform-origin:right center;">42</div>
<div class="t" style="right:69px;top:43.74px;font-size:12px;line-height:13.404px;letter-spacing:0px;transform:scaleX(0.9);transform-origin:right center;">6.83%</div>
<div class="t" style="right:35px;top:43.74px;font-size:12px;line-height:13.404px;letter-spacing:0px;transform:scaleX(0.9);transform-origin:right center;">0</div>
<div class="t" style="left:6px;top:60.74px;font-size:12px;line-height:13.404px;letter-spacing:0px;transform:scaleX(0.9);transform-origin:left center;">&lt;(computer OR monitor OR keyboard OR...</div>
<div class="t" style="right:297px;top:60.74px;font-size:12px;line-height:13.404px;letter-spacing:0px;transform:scaleX(0.9);transform-origin:right center;">230</div>
<div class="t" style="right:227px;top:60.74px;font-size:12px;line-height:13.404px;letter-spacing:0px;transform:scaleX(0.9);transform-origin:right center;">252</div>
<div class="t" style="right:174px;top:60.74px;font-size:12px;line-height:13.404px;letter-spacing:0px;transform:scaleX(0.9);transform-origin:right center;">92</div>
<div class="t" style="right:119px;top:60.74px;font-size:12px;line-height:13.404px;letter-spacing:0px;transform:scaleX(0.9);transform-origin:right center;">574</div>
<div class="t" style="right:69px;top:60.74px;font-size:12px;line-height:13.404px;letter-spacing:0px;transform:scaleX(0.9);transform-origin:right center;">93.33%</div>
<div class="t" style="right:35px;top:60.74px;font-size:12px;line-height:13.404px;letter-spacing:0px;transform:scaleX(0.9);transform-origin:right center;">0</div>
<div class="t" style="left:6px;top:77.74px;font-size:12px;line-height:13.404px;letter-spacing:0px;transform:scaleX(0.9);transform-origin:left center;">&lt;dog OR cat OR horse OR mouse OR h...</div>
<div class="t" style="right:297px;top:77.74px;font-size:12px;line-height:13.404px;letter-spacing:0px;transform:scaleX(0.9);transform-origin:right center;">16</div>
<div class="t" style="right:227px;top:77.74px;font-size:12px;line-height:13.404px;letter-spacing:0px;transform:scaleX(0.9);transform-origin:right center;">40</div>
<div class="t" style="right:174px;top:77.74px;font-size:12px;line-height:13.404px;letter-spacing:0px;transform:scaleX(0.9);transform-origin:right center;">25</div>
<div class="t" style="right:119px;top:77.74px;font-size:12px;line-height:13.404px;letter-spacing:0px;transform:scaleX(0.9);transform-origin:right center;">81</div>
<div class="t" style="right:69px;top:77.74px;font-size:12px;line-height:13.404px;letter-spacing:0px;transform:scaleX(0.9);transform-origin:right center;">13.17%</div>
<div class="t" style="right:35px;top:77.74px;font-size:12px;line-height:13.404px;letter-spacing:0px;transform:scaleX(0.9);transform-origin:right center;">0</div>
</div></div>
<div style="position:absolute;left:1px;top:579px;width:782px;height:1px;background:#dadada"></div>
<div style="position:absolute;left:1px;top:580px;width:782px;height:21px;background:#f0f0f0"></div>
<div class="t" style="left:5px;top:584.74px;font-size:12px;line-height:13.404px;color:#000;letter-spacing:0px;">Keyword summary loaded</div>
<div style="position:absolute;left:0px;top:0px;width:784px;height:1px;background:#707070"></div>
<div style="position:absolute;left:0px;top:0px;width:1px;height:602px;background:#707070"></div>
<div style="position:absolute;left:783px;top:0px;width:1px;height:602px;background:#6a6a6a"></div>
<div style="position:absolute;left:0px;top:601px;width:784px;height:1px;background:#707070"></div>
</body></html>
